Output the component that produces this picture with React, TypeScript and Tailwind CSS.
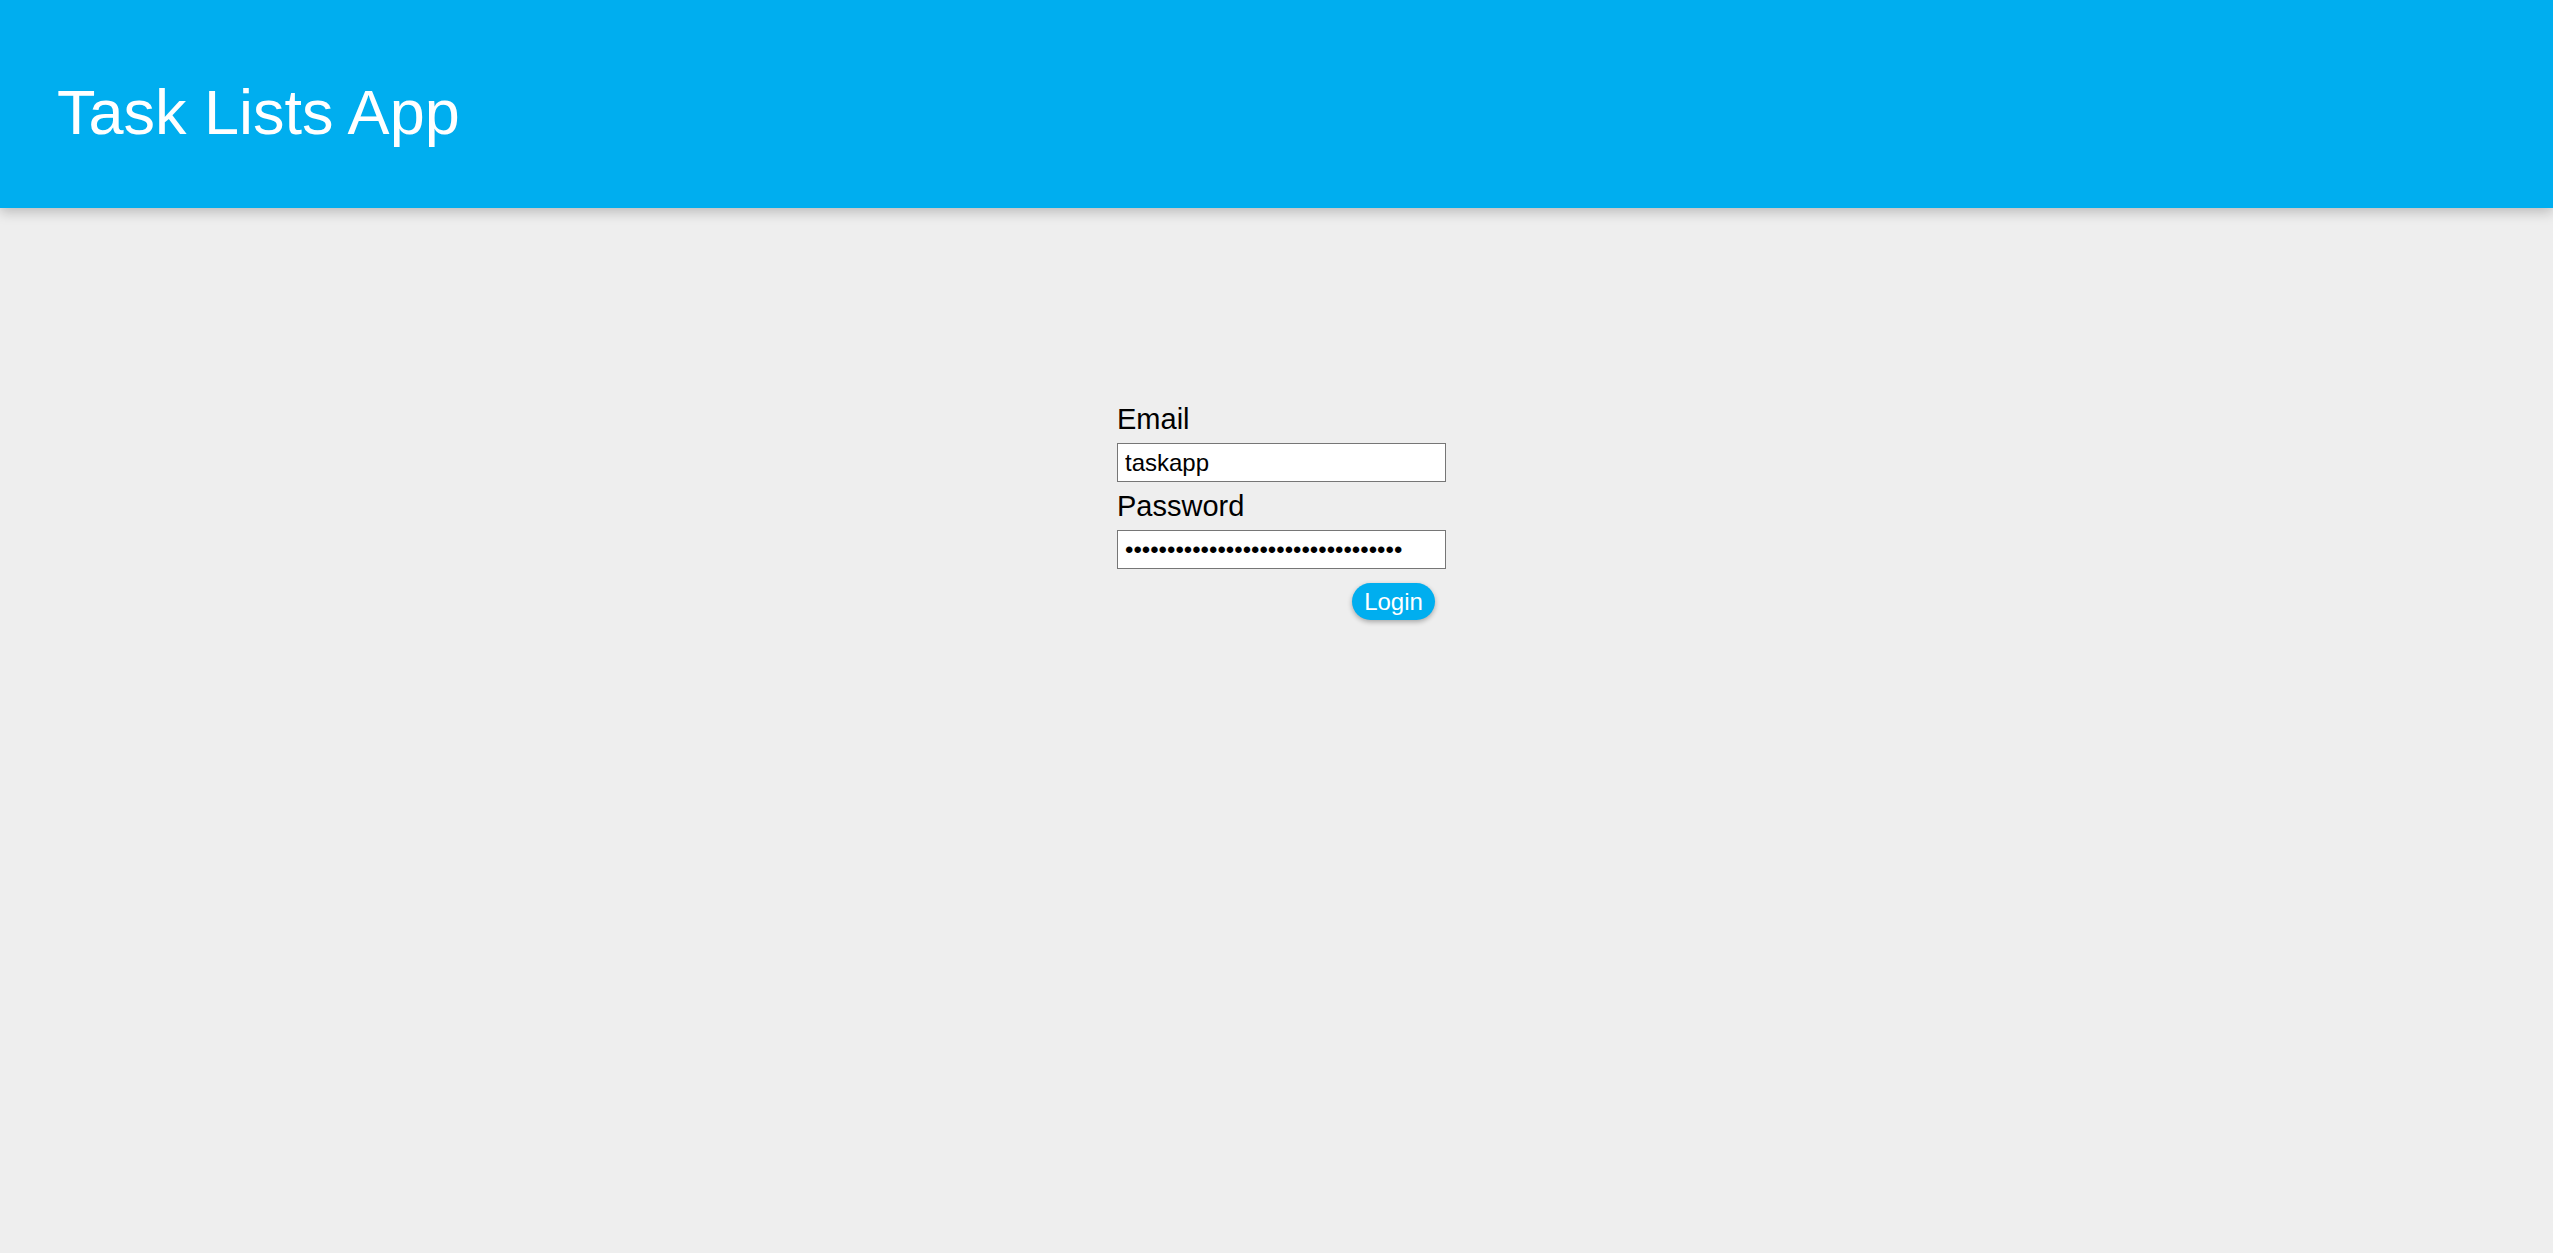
export default function App() {
  return (
    <div className="min-h-screen bg-[#eeeeee] font-['Liberation_Sans',Arial,sans-serif]">
      <header className="flex h-[208px] items-center bg-[#00aeef] px-[57px] pt-[16px] shadow-[0_4px_12px_rgba(0,0,0,0.22)]">
        <h1 className="font-['Comic_Sans_MS','Liberation_Sans',sans-serif] text-[63px] leading-none text-white">
          Task Lists App
        </h1>
      </header>
      <main className="flex justify-center pt-[187px]">
        <form className="flex w-[339px] flex-col pl-[10px]" onSubmit={(e) => e.preventDefault()}>
          <label className="h-[48px] font-['Comic_Sans_MS','Liberation_Sans',sans-serif] text-[29px] leading-[48px] text-black">
            Email
          </label>
          <input
            type="text"
            defaultValue="taskapp"
            className="h-[39px] w-[329px] border border-[#767676] bg-white px-[7px] text-[24px] text-black outline-none"
          />
          <label className="h-[48px] font-['Comic_Sans_MS','Liberation_Sans',sans-serif] text-[29px] leading-[48px] text-black">
            Password
          </label>
          <input
            type="password"
            defaultValue="taskapptaskapptaskapptaskapp12345"
            className="h-[39px] w-[329px] border border-[#767676] bg-white px-[7px] text-[24px] text-black outline-none"
          />
          <button
            type="submit"
            className="mt-[14px] mr-[11px] h-[37px] w-[83px] self-end rounded-full bg-[#00aeef] text-[24px] leading-none text-white shadow-[0_2px_5px_rgba(0,0,0,0.3)]"
          >
            Login
          </button>
        </form>
      </main>
    </div>
  );
}
